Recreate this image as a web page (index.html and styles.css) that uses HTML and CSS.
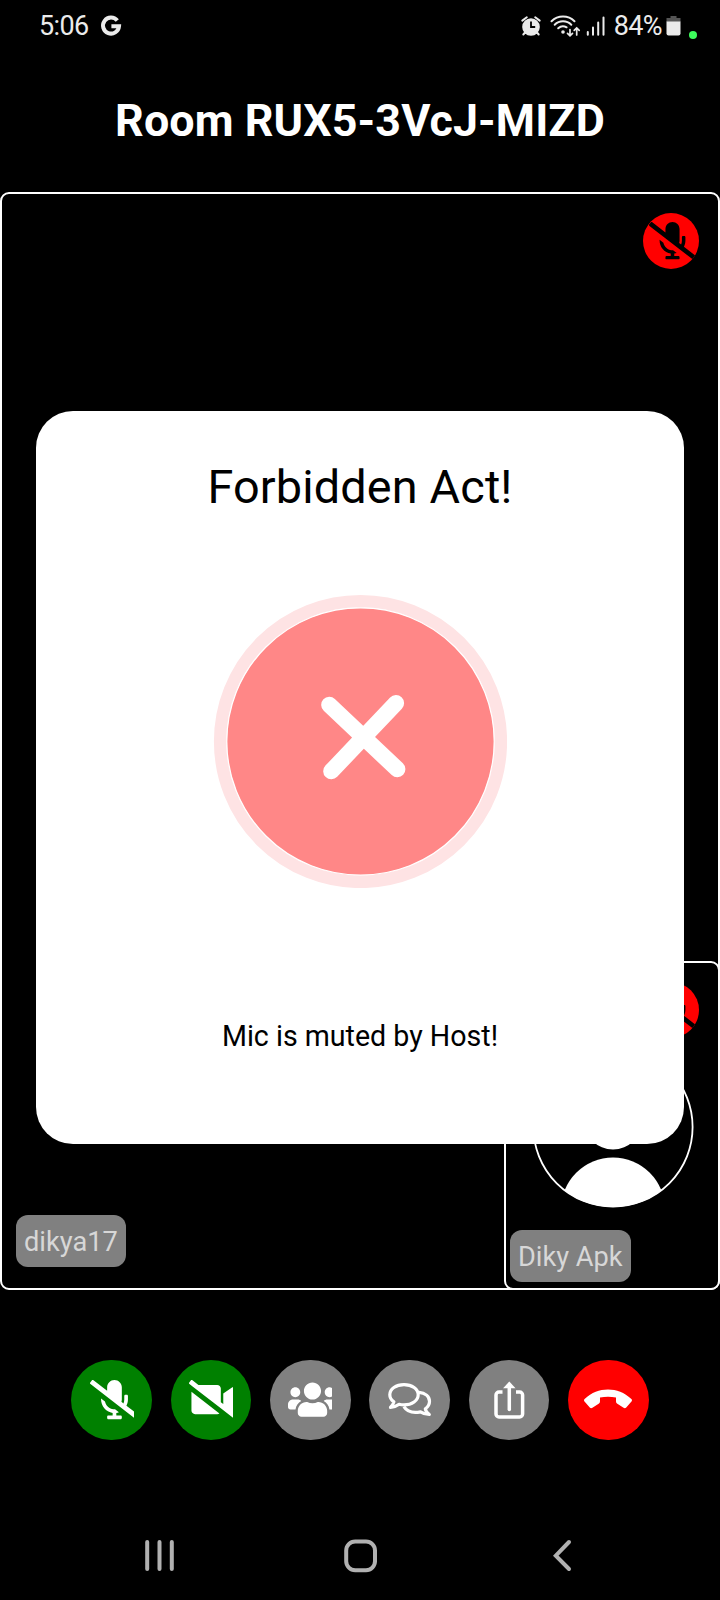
FILE: index.html
```html
<!DOCTYPE html>
<html lang="en">
<head>
<meta charset="utf-8">
<title>Room RUX5-3VcJ-MIZD</title>
<link rel="stylesheet" href="styles.css">
</head>
<body>
<svg class="defs" aria-hidden="true">
  <symbol id="mic-slash" viewBox="0 0 640 512"><path d="M633.82 458.1l-157.8-121.96C488.61 312.13 496 285.01 496 256v-48c0-8.84-7.16-16-16-16h-16c-8.84 0-16 7.16-16 16v48c0 17.92-3.96 34.8-10.72 50.2l-26.55-20.52c3.1-9.4 5.28-19.22 5.28-29.67V96c0-53.02-42.98-96-96-96s-96 42.98-96 96v45.36L45.47 3.37C38.49-2.05 28.43-.8 23.01 6.18L3.37 31.45C-2.05 38.42-.8 48.47 6.18 53.9l588.36 454.73c6.98 5.43 17.03 4.17 22.46-2.81l19.64-25.27c5.41-6.97 4.16-17.02-2.82-22.45zM400 464h-56v-33.77c11.66-1.6 22.85-4.54 33.67-8.31l-50.14-38.75c-6.71.4-13.41.87-20.35.2-55.85-5.45-98.74-48.63-111.18-101.85L144 241.31v6.85c0 89.64 63.97 169.55 152 181.69V464h-56c-8.84 0-16 7.16-16 16v16c0 8.84 7.16 16 16 16h160c8.84 0 16-7.16 16-16v-16c0-8.84-7.16-16-16-16z"/></symbol>
</svg>
<div class="screen">
  <header class="status">
    <span class="clock">5:06</span>
    <svg class="g-icon" width="22" height="22" viewBox="0 0 22 22"><path d="M17.3 5.6A8 8 0 1 0 19 11.3H11.4" fill="none" stroke="#ebebeb" stroke-width="4"/></svg>
    <span class="spacer"></span>
    <svg class="status-icons" width="90" height="26" viewBox="519 13 90 26">
      <circle cx="531" cy="27" r="8.8" fill="#ebebeb"/>
      <path d="M531 21.5V27h4.2" fill="none" stroke="#000" stroke-width="1.8"/>
      <path d="M522.3 20.6l4.5-3.3M535.2 17.3l4.5 3.3M525 32.5l-1.7 2M537 32.5l1.7 2" stroke="#ebebeb" stroke-width="2" stroke-linecap="round"/>
      <g fill="none" stroke="#ebebeb" stroke-width="2" stroke-linecap="round">
        <path d="M551.5 21.2a16.5 16.5 0 0 1 23 0M554.7 24.8a11.7 11.7 0 0 1 16.6 0M558.2 28.3a7 7 0 0 1 8.4-1"/>
        <path d="M570 29.5v6M567.5 33.4l2.5 2.4 2.5-2.4M576.7 35v-6.8M574.2 30.4l2.5-2.5 2.5 2.5" stroke-width="1.7"/>
        <path d="M587.8 32v2.7M593 27.5v7.2M598.2 22.5v12.2M603.5 17.5v17.2" stroke-width="2"/>
      </g>
      <circle cx="563" cy="32" r="1.8" fill="#ebebeb"/>
    </svg>
    <span class="battery-text">84%</span>
    <svg class="battery" width="15" height="22" viewBox="0 0 15 22"><path d="M4.5 1h6v2H14.5v4H.5V3h4z" fill="#555"/><path d="M.5 6.5h14v12a2 2 0 0 1-2 2h-10a2 2 0 0 1-2-2z" fill="#ebebeb"/></svg>
    <i class="privacy-dot"></i>
  </header>

  <h1 class="room-title"><span>Room RUX5-3VcJ-MIZD</span></h1>

  <main class="stage">
    <div class="muted-badge"><svg><use href="#mic-slash"/></svg></div>
    <span class="name">dikya17</span>
    <section class="self">
      <div class="muted-badge"><svg><use href="#mic-slash"/></svg></div>
      <svg class="avatar" width="162" height="162" viewBox="0 0 162 162">
        <clipPath id="face"><circle cx="81" cy="81" r="80"/></clipPath>
        <g fill="#fff" clip-path="url(#face)"><circle cx="81" cy="74.5" r="29"/><circle cx="81" cy="163.5" r="52"/></g>
        <circle cx="81" cy="81" r="79.6" fill="none" stroke="#fff" stroke-width="1.8"/>
      </svg>
      <span class="name">Diky Apk</span>
    </section>
  </main>

  <div class="controls">
    <button class="control on" aria-label="Microphone"><svg class="glyph" viewBox="0 0 44 40"><g transform="scale(.0765)"><path d="M633.82 458.1l-157.8-121.96C488.61 312.13 496 285.01 496 256v-48c0-8.84-7.16-16-16-16h-16c-8.84 0-16 7.16-16 16v48c0 17.92-3.96 34.8-10.72 50.2l-26.55-20.52c3.1-9.4 5.28-19.22 5.28-29.67V96c0-53.02-42.98-96-96-96s-96 42.98-96 96v45.36L45.47 3.37C38.49-2.05 28.43-.8 23.01 6.18L3.37 31.45C-2.05 38.42-.8 48.47 6.18 53.9l588.36 454.73c6.98 5.43 17.03 4.17 22.46-2.81l19.64-25.27c5.41-6.97 4.16-17.02-2.82-22.45zM400 464h-56v-33.77c11.66-1.6 22.85-4.54 33.67-8.31l-50.14-38.75c-6.71.4-13.41.87-20.35.2-55.85-5.45-98.74-48.63-111.18-101.85L144 241.31v6.85c0 89.64 63.97 169.55 152 181.69V464h-56c-8.84 0-16 7.16-16 16v16c0 8.84 7.16 16 16 16h160c8.84 0 16-7.16 16-16v-16c0-8.84-7.16-16-16-16z"/></g></svg></button>
    <button class="control on" aria-label="Camera"><svg class="glyph" viewBox="0 0 44 40"><g transform="scale(.0765)"><path d="M633.8 458.1l-55-42.5c15.4-1.4 29.2-13.7 29.2-31.1v-257c0-25.5-29.1-40.4-50.4-25.8L448 177.3v137.2l-32-24.7v-178c0-26.4-21.4-47.8-47.8-47.8H123.9L45.5 3.4C38.5-2 28.5-.8 23 6.2L3.4 31.4c-5.4 7-4.2 17 2.8 22.4L42.7 82 416 370.6l178.5 138c7 5.4 17 4.2 22.5-2.8l19.6-25.3c5.5-6.9 4.2-17-2.8-22.4zM32 400.2c0 26.4 21.4 47.8 47.8 47.8h288.4c11.2 0 21.4-4 29.6-10.5L32 154.7v245.5z"/></g></svg></button>
    <button class="control" aria-label="Participants"><svg class="glyph" viewBox="0 0 44 40"><g transform="scale(.0765)"><path d="M96 224c35.3 0 64-28.7 64-64s-28.7-64-64-64-64 28.7-64 64 28.7 64 64 64zm448 0c35.3 0 64-28.7 64-64s-28.7-64-64-64-64 28.7-64 64 28.7 64 64 64zm32 32h-64c-17.6 0-33.5 7.1-45.1 18.6 40.3 22.1 68.9 62 75.1 109.4h66c17.7 0 32-14.3 32-32v-32c0-35.3-28.7-64-64-64zm-256 0c61.9 0 112-50.1 112-112S381.9 32 320 32 208 82.1 208 144s50.1 112 112 112zm76.8 32h-8.3c-20.8 10-43.9 16-68.5 16s-47.6-6-68.5-16h-8.3C179.6 288 128 339.6 128 403.2V432c0 26.5 21.5 48 48 48h288c26.5 0 48-21.5 48-48v-28.8c0-63.6-51.6-115.2-115.2-115.2zm-223.7-13.4C161.5 263.1 145.6 256 128 256H64c-35.3 0-64 28.7-64 64v32c0 17.7 14.3 32 32 32h65.9c6.3-47.4 34.9-87.3 75.2-109.4z"/></g></svg></button>
    <button class="control" aria-label="Chat"><svg class="glyph outline" viewBox="0 0 44 40"><path d="M16 4.600c8 0 14.200 4.400 14.200 10.100s-6.200 10.200-14.200 10.200c-1.800 0-3.300-.2-4.900-.6-2.500 1.900-5 2.900-8.600 3.100 1.800-1.900 3-3.300 3.400-5.600C3.300 20 1.800 17.500 1.800 14.700c0-5.700 6.200-10.100 14.200-10.100z"/><path d="M31 12.300C37.200 12.700 41.500 16.500 41.500 21.200c0 3.200-1.700 5.800-4.200 7.500.3 2.500 1.800 4.100 4 5.800-3.600 0-6.400-1-8.800-2.600-7.700 1.500-13.700-.6-16.600-5.200"/></svg></button>
    <button class="control" aria-label="Share"><svg class="glyph" viewBox="0 0 44 40"><path d="M15.5 12H12a3 3 0 0 0-3 3v19a3 3 0 0 0 3 3h20.600a3 3 0 0 0 3-3V15a3 3 0 0 0-3-3H29" fill="none" stroke="#fff" stroke-width="3.500"/><path d="M22.300 7V29.500" fill="none" stroke="#fff" stroke-width="3.500" stroke-linecap="round"/><path d="M22.300 1.500L28.500 8.300H16.100z"/></svg></button>
    <button class="control end" aria-label="Leave"><svg class="phone" width="50" height="21" viewBox="0 0 52 22"><path d="M1.500 11.500C9 4.500 17 1.500 26 1.500s17 3 24.500 10c.8.800.8 1.900.1 2.700l-5.500 6.300c-.8.900-1.800 1-2.800.3l-6.500-4.300c-1-.6-1.400-1.400-1.400-2.600V10C29 8.900 23 8.900 17.600 10v3.900c0 1.200-.4 2-1.400 2.600l-6.500 4.300c-1 .7-2 .6-2.800-.3L1.400 14.200c-.7-.8-.7-1.900.1-2.700z"/></svg></button>
  </div>

  <nav class="navbar">
    <svg width="480" height="36" viewBox="0 0 480 36" fill="none" stroke="#b1b1b1" stroke-width="4" stroke-linecap="round">
      <path d="M27.200 5v27M39.500 5v27M51.800 5v27"/>
      <rect x="106" y="4.500" width="28.800" height="28.800" rx="9" transform="translate(120.200 0)"/>
      <path d="M449 5l-13.200 13.700L449 32"/>
    </svg>
  </nav>

  <div class="dialog" role="dialog">
    <h2><span>Forbidden Act!</span></h2>
    <svg class="failure" width="294" height="294" viewBox="213 593.800 294 294">
      <circle cx="360.500" cy="741.300" r="140.300" fill="none" stroke="#fee3e4" stroke-width="12.600"/>
      <circle cx="360.500" cy="741.300" r="133.700" fill="#ff8787" stroke="#fff" stroke-width="1.200"/>
      <path d="M329.300 704.700L397.300 769M396 703L331.300 771" stroke="#fff" stroke-width="16.200" stroke-linecap="round"/>
    </svg>
    <p><span>Mic is muted by Host!</span></p>
  </div>
</div>
</body>
</html>
```

FILE: styles.css
```css
* { box-sizing: border-box; }
body { margin: 0; background: #000; font-family: Roboto, "Liberation Sans", sans-serif; }
h1, h2, p { margin: 0; font-weight: 400; }
svg { display: block; flex: none; }
.defs { position: absolute; width: 0; height: 0; }
.screen { position: relative; width: 720px; height: 1600px; display: flex; flex-direction: column; background: #000; overflow: hidden; }

.status { height: 52px; flex: none; display: flex; align-items: center; padding: 0 23px 0 39px; color: #ebebeb; font-size: 27px; line-height: 54px; }
.clock { letter-spacing: -.6px; }
.g-icon { margin-left: 11px; }
.spacer { flex: 1; }
.battery-text { margin-left: 5px; letter-spacing: -.6px; }
.battery { margin-left: 4px; }
.privacy-dot { width: 8px; height: 8px; margin: 18px 0 0 8px; border-radius: 50%; background: #3dfc5c; }

.room-title { height: 140px; flex: none; text-align: center; color: #fff; font-size: 44.8px; font-weight: 700; line-height: 138px; letter-spacing: .1px; white-space: nowrap; }

.stage { position: relative; height: 1098px; flex: none; border: 2px solid #fff; border-radius: 9px; display: flex; flex-direction: column; justify-content: space-between; align-items: flex-start; padding: 19px 19px 21px 14px; }
.muted-badge { width: 56px; height: 56px; border-radius: 50%; background: #f00; overflow: hidden; align-self: flex-end; flex: none; display: flex; justify-content: center; align-items: center; }
.muted-badge svg { width: 47px; height: 37.6px; margin-left: 2px; fill: #000; }
.name { height: 52px; flex: none; padding: 0 8px; border-radius: 12px; background: #808080; color: #d7d7d7; font-size: 27.2px; line-height: 55px; white-space: nowrap; }
.self { position: absolute; right: -2px; bottom: -2px; width: 216px; height: 329px; border: 2px solid #fff; border-radius: 9px; background: #000; display: flex; flex-direction: column; align-items: flex-start; padding: 19px 19px 6px 4px; }
.avatar { margin: 7.5px 0 0 21.5px; }
.self .name { margin-top: auto; }

.controls { flex: none; margin-top: 69.500px; display: flex; justify-content: center; gap: 18.800px; }
.control { width: 80.600px; height: 80.600px; flex: none; padding: 0; border: 0; border-radius: 50%; background: #808080; display: flex; align-items: center; justify-content: center; }
.control.on { background: #008000; }
.control.end { background: #f00; }
.control svg { fill: #fff; }
.glyph { width: 44px; height: 40px; }
.control .outline { fill: none; stroke: #fff; stroke-width: 3.2; stroke-linejoin: round; }
.phone { margin-top: -3px; }

.navbar { margin-top: 97.400px; display: flex; justify-content: center; }

.dialog { position: absolute; left: 36px; top: 411px; width: 648px; height: 732.500px; border-radius: 37px; background: #fff; color: #000; display: flex; flex-direction: column; align-items: center; padding-top: 46px; }
.dialog h2 { font-size: 46.800px; line-height: 60px; letter-spacing: .15px; }
.failure { margin-top: 77.300px; }
.dialog p { margin-top: 129.500px; font-size: 28.600px; line-height: 36px; }
```
